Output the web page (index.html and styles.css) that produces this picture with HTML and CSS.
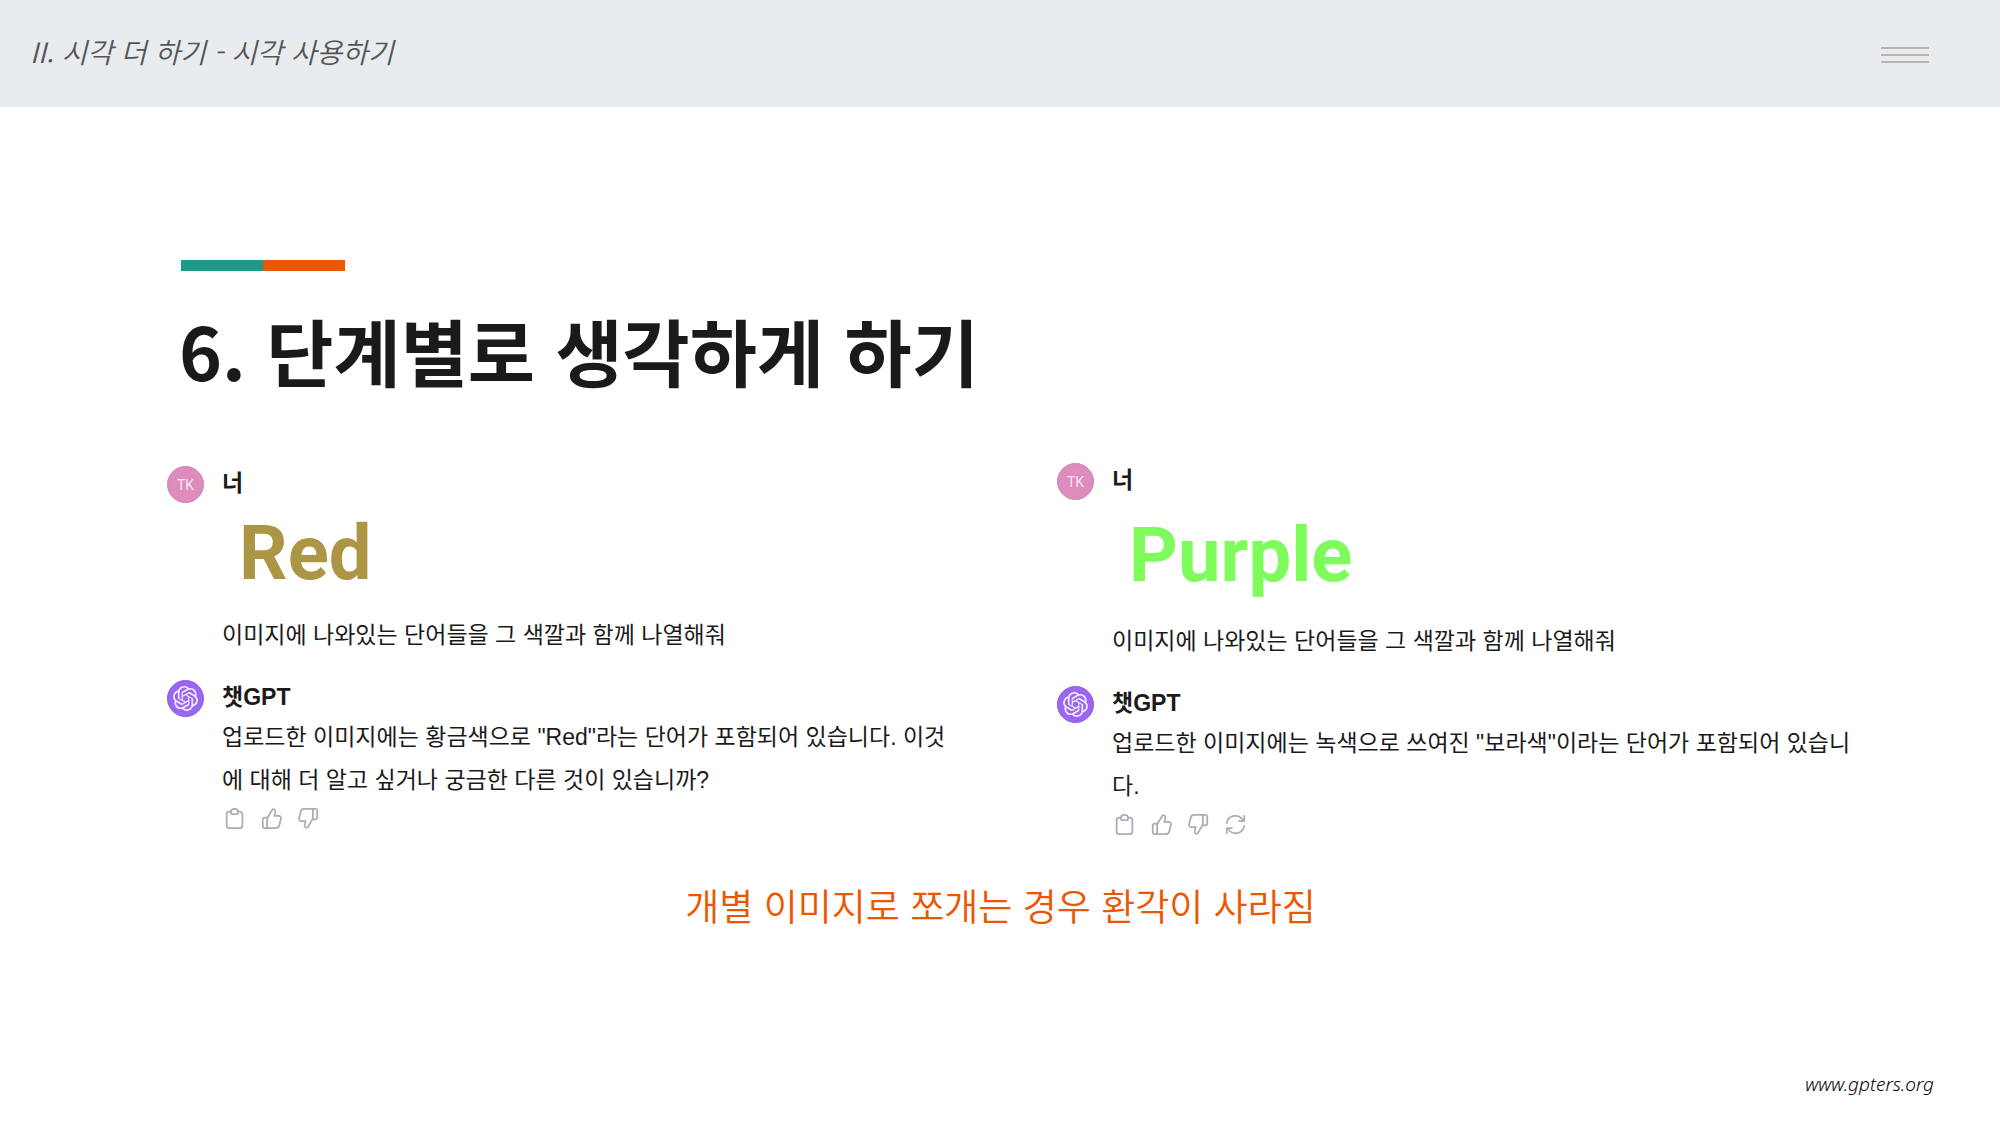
FILE: index.html
```html
<!DOCTYPE html>
<html lang="ko">
<head>
<meta charset="utf-8">
<meta name="viewport" content="width=device-width, initial-scale=1">
<title>단계별로 생각하게 하기</title>
<link rel="stylesheet" href="styles.css">
</head>
<body>
<svg class="sprite" aria-hidden="true">
  <symbol id="logo" viewBox="0 0 24 24"><path fill="currentColor" d="M22.2819 9.8211a5.9847 5.9847 0 0 0-.5157-4.9108 6.0462 6.0462 0 0 0-6.5098-2.9A6.0651 6.0651 0 0 0 4.9807 4.1818a5.9847 5.9847 0 0 0-3.9977 2.9 6.0462 6.0462 0 0 0 .7427 7.0966 5.98 5.98 0 0 0 .511 4.9107 6.051 6.051 0 0 0 6.5146 2.9001A5.9847 5.9847 0 0 0 13.2599 24a6.0557 6.0557 0 0 0 5.7718-4.2058 5.9894 5.9894 0 0 0 3.9977-2.9001 6.0557 6.0557 0 0 0-.7475-7.0729zm-9.022 12.6081a4.4755 4.4755 0 0 1-2.8764-1.0408l.1419-.0804 4.7783-2.7582a.7948.7948 0 0 0 .3927-.6813v-6.7369l2.02 1.1686a.071.071 0 0 1 .038.052v5.5826a4.504 4.504 0 0 1-4.4945 4.4944zm-9.6607-4.1254a4.4708 4.4708 0 0 1-.5346-3.0137l.142.0852 4.783 2.7582a.7712.7712 0 0 0 .7806 0l5.8428-3.3685v2.3324a.0804.0804 0 0 1-.0332.0615L9.74 19.9502a4.4992 4.4992 0 0 1-6.1408-1.6464zM2.3408 7.8956a4.485 4.485 0 0 1 2.3655-1.9728V11.6a.7664.7664 0 0 0 .3879.6765l5.8144 3.3543-2.0201 1.1685a.0757.0757 0 0 1-.071 0l-4.8303-2.7865A4.504 4.504 0 0 1 2.3408 7.872zm16.5963 3.8558L13.1038 8.364 15.1192 7.2a.0757.0757 0 0 1 .071 0l4.8303 2.7913a4.4944 4.4944 0 0 1-.6765 8.1042v-5.6772a.79.79 0 0 0-.407-.667zm2.0107-3.0231l-.142-.0852-4.7735-2.7818a.7759.7759 0 0 0-.7854 0L9.409 9.2297V6.8974a.0662.0662 0 0 1 .0284-.0615l4.8303-2.7866a4.4992 4.4992 0 0 1 6.6802 4.66zM8.3065 12.863l-2.02-1.1638a.0804.0804 0 0 1-.038-.0567V6.0742a4.4992 4.4992 0 0 1 7.3757-3.4537l-.142.0805L8.704 5.459a.7948.7948 0 0 0-.3927.6813zm1.0976-2.3654l2.602-1.4998 2.6069 1.4998v2.9994l-2.5974 1.4997-2.6067-1.4997Z"/></symbol>
  <symbol id="clipboard" viewBox="0 0 24 24"><path d="M8 4H6a3 3 0 0 0-3 3v13a3 3 0 0 0 3 3h12a3 3 0 0 0 3-3V7a3 3 0 0 0-3-3h-2M8 4a4 3 0 0 1 8 0v1a2 2 0 0 1-2 2h-4a2 2 0 0 1-2-2z"/></symbol>
  <symbol id="thumb" viewBox="0 0 24 24"><path d="M7 11H4.500A2.500 2.500 0 0 0 2 13.500v7A2.500 2.500 0 0 0 4.500 23H7M7 23V13c0-1 .3-1.600.8-2.400L12.500 2.500c.4-.8 1-1.300 1.800-1.100 1.700.4 2.400 2 2 3.600L15.300 9H20c2 0 3.200 1.500 2.700 3.500l-1.900 7.500c-.5 2-1.800 3-3.800 3z"/></symbol>
  <symbol id="refresh" viewBox="0 0 24 24"><path d="M2 10.500a10 10 0 0 1 18.500-3.500M22 2v6h-6M22 13.500a10 10 0 0 1-18.500 3.500M2 22v-6h6"/></symbol>
</svg>

<header class="topbar">
  <p class="chapter">II. 시각 더 하기 - 시각 사용하기</p>
  <button class="menu" type="button" aria-label="메뉴"><span></span><span></span><span></span></button>
</header>

<main>
  <div class="accent"></div>
  <h1>6. 단계별로 생각하게 하기</h1>

  <div class="chats">
    <section class="chat chat-red">
      <article class="message">
        <div class="avatar user">TK</div>
        <div>
          <h2>너</h2>
          <div class="word red">Red</div>
          <p>이미지에 나와있는 단어들을 그 색깔과 함께 나열해줘</p>
        </div>
      </article>
      <article class="message">
        <div class="avatar bot"><svg><use href="#logo"/></svg></div>
        <div>
          <h2>챗GPT</h2>
          <p>업로드한 이미지에는 황금색으로 "Red"라는 단어가 포함되어 있습니다. 이것에 대해 더 알고 싶거나 궁금한 다른 것이 있습니까?</p>
          <div class="actions">
            <button type="button" aria-label="복사"><svg><use href="#clipboard"/></svg></button>
            <button type="button" aria-label="좋아요"><svg><use href="#thumb"/></svg></button>
            <button type="button" aria-label="싫어요"><svg class="down"><use href="#thumb"/></svg></button>
          </div>
        </div>
      </article>
    </section>

    <section class="chat">
      <article class="message">
        <div class="avatar user">TK</div>
        <div>
          <h2>너</h2>
          <div class="word purple">Purple</div>
          <p>이미지에 나와있는 단어들을 그 색깔과 함께 나열해줘</p>
        </div>
      </article>
      <article class="message">
        <div class="avatar bot"><svg><use href="#logo"/></svg></div>
        <div>
          <h2>챗GPT</h2>
          <p>업로드한 이미지에는 녹색으로 쓰여진 "보라색"이라는 단어가 포함되어 있습니다.</p>
          <div class="actions">
            <button type="button" aria-label="복사"><svg><use href="#clipboard"/></svg></button>
            <button type="button" aria-label="좋아요"><svg><use href="#thumb"/></svg></button>
            <button type="button" aria-label="싫어요"><svg class="down"><use href="#thumb"/></svg></button>
            <button type="button" aria-label="다시 생성"><svg><use href="#refresh"/></svg></button>
          </div>
        </div>
      </article>
    </section>
  </div>

  <p class="caption">개별 이미지로 쪼개는 경우 환각이 사라짐</p>
</main>

<footer><a href="#">www.gpters.org</a></footer>
</body>
</html>
```

FILE: styles.css
```css
* { box-sizing: border-box; }

body {
  margin: 0;
  min-height: 100vh;
  display: flex;
  flex-direction: column;
  background: #fff;
  color: #1a1a1a;
  font-family: "Noto Sans CJK KR", sans-serif;
}

h1, h2, p { margin: 0; }

button {
  padding: 0;
  border: 0;
  background: none;
  color: inherit;
}

.sprite { display: none; }

.topbar {
  height: 107px;
  padding: 0 71px 0 30px;
  display: flex;
  align-items: center;
  justify-content: space-between;
  background: #e8ecee;
}

.chapter {
  padding-bottom: 6px;
  font-size: 28px;
  line-height: 40px;
  font-style: italic;
  font-weight: 350;
  color: #555;
}

.menu {
  width: 48px;
  padding-top: 2px;
  display: grid;
  gap: 5px;
}

.menu span {
  height: 2px;
  background: #b5b5b5;
}

main { padding: 153px 146px 0 167px; }

.accent {
  width: 164px;
  height: 11px;
  margin-left: 14px;
  background: linear-gradient(90deg, #1d9a88 50%, #eb5600 50%);
}

h1 {
  margin: 25px 0 0 12px;
  font-size: 73px;
  line-height: 106px;
  font-weight: 700;
}

.chats {
  margin-top: 61px;
  display: grid;
  grid-template-columns: 1fr 1fr;
  column-gap: 93px;
}

.chat {
  display: flex;
  flex-direction: column;
  gap: 23px;
  font-family: "Liberation Sans", "Noto Sans CJK KR", sans-serif;
}

.chat-red { padding-top: 3px; }

.message {
  display: grid;
  grid-template-columns: 37px 1fr;
  column-gap: 18px;
}

.avatar {
  width: 37px;
  height: 37px;
  border-radius: 50%;
  display: flex;
  align-items: center;
  justify-content: center;
}

.user {
  background: #de8bbd;
  border: 1px solid #cf83b2;
  color: #f8e3f0;
  font-family: Roboto, sans-serif;
  font-size: 14px;
}

.bot {
  background: #9b66f2;
  border: 1px solid #905fe2;
  color: #f4edff;
}

.bot svg {
  width: 25px;
  height: 25px;
}

.message h2 {
  font-size: 23px;
  line-height: 34px;
  font-weight: 700;
}

.message p {
  padding-top: 2px;
  font-size: 23px;
  line-height: 43px;
}

.word {
  padding: 0 0 6px 17px;
  display: flex;
  align-items: center;
  font-family: Roboto, sans-serif;
  font-size: 76px;
  font-weight: 700;
}

.red {
  height: 112px;
  color: #ac9645;
}

.purple {
  height: 121px;
  color: #7dfc5c;
}

.actions {
  margin: 6px 0 0 2px;
  display: flex;
  gap: 16px;
}

.actions button {
  width: 21px;
  height: 21px;
}

.actions svg {
  display: block;
  width: 21px;
  height: 21px;
  fill: none;
  stroke: #acacb9;
  stroke-width: 2;
  stroke-linecap: round;
  stroke-linejoin: round;
}

.actions .down { transform: rotate(180deg); }

.caption {
  margin: 43px 0 0 -20px;
  font-size: 37px;
  line-height: 54px;
  font-weight: 350;
  text-align: center;
  color: #eb5600;
}

footer {
  margin-top: auto;
  padding: 0 66px 28px;
  text-align: right;
}

footer a {
  color: #000;
  font-family: "Noto Sans", sans-serif;
  font-size: 19px;
  line-height: 26px;
  font-style: italic;
  font-weight: 300;
  text-decoration: none;
}
```
